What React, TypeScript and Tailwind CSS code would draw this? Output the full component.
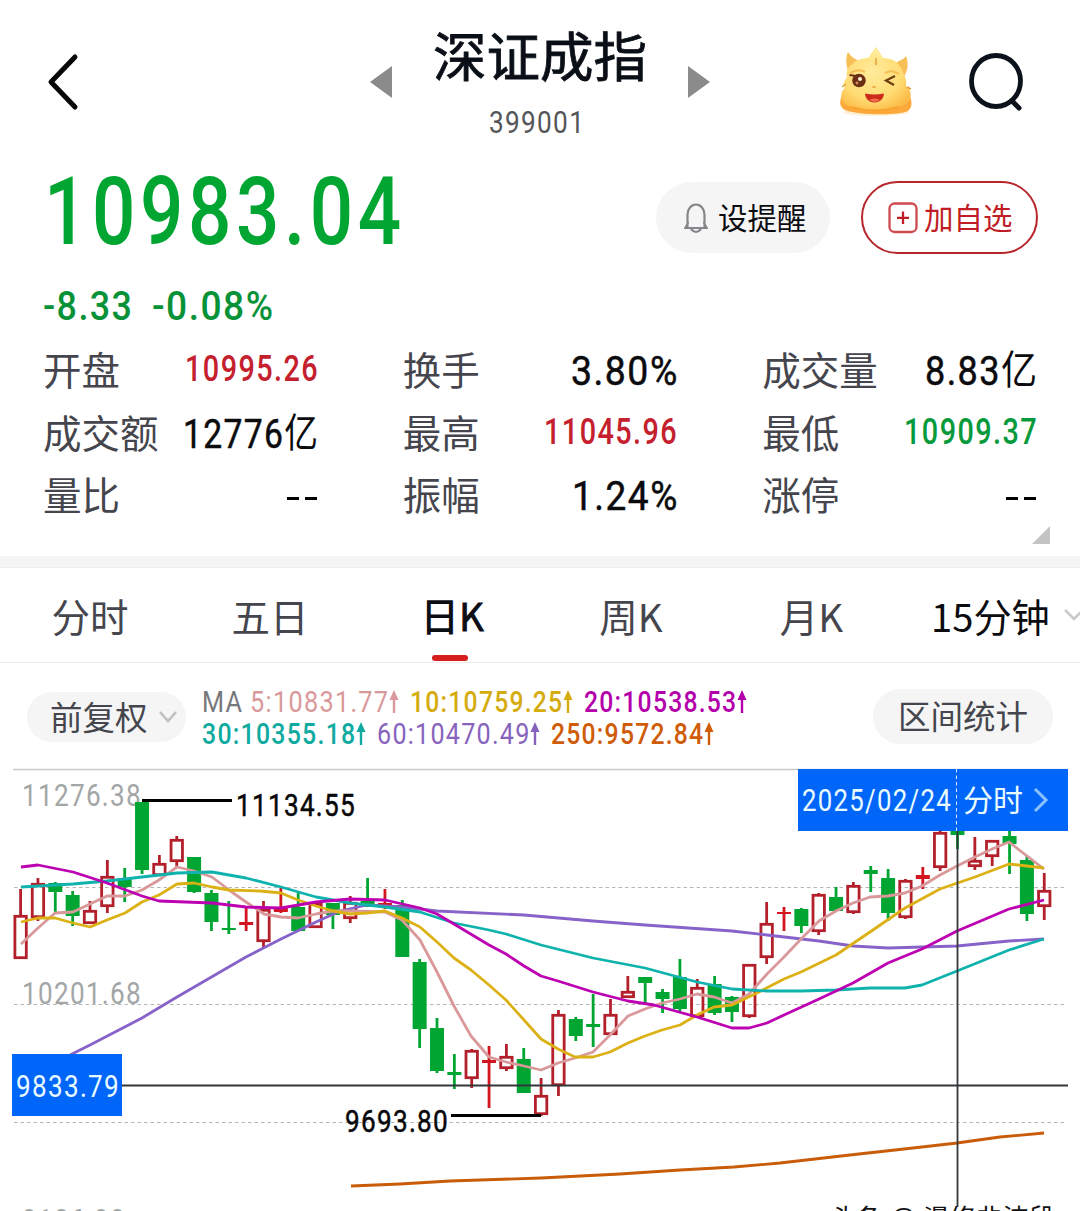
import { useLayoutEffect, useRef, useState, type ReactNode } from "react";

/* Condenses or widens its text to fill the width given by the class name. */
function Fit({ className = "", children }: { className?: string; children: ReactNode }) {
  const box = useRef<HTMLSpanElement>(null);
  const text = useRef<HTMLSpanElement>(null);
  const [scale, setScale] = useState(1);
  useLayoutEffect(() => {
    if (box.current && text.current) {
      const trailing = parseFloat(getComputedStyle(text.current).letterSpacing) || 0;
      setScale(box.current.clientWidth / (text.current.offsetWidth - trailing));
    }
  }, []);
  return (
    <span ref={box} className={`block shrink-0 whitespace-nowrap ${className}`}>
      <span ref={text} className="inline-block origin-left" style={{ transform: `scaleX(${scale})` }}>
        {children}
      </span>
    </span>
  );
}

function Mascot() {
  return (
    <svg viewBox="0 0 76 72" className="h-[72px] w-[76px]">
      <defs>
        <radialGradient id="face" cx="0.45" cy="0.4" r="0.65">
          <stop offset="0" stopColor="#ffeb9c" />
          <stop offset="0.65" stopColor="#ffdc74" />
          <stop offset="1" stopColor="#fcbc48" />
        </radialGradient>
        <linearGradient id="horn" x1="0" y1="0" x2="0" y2="1">
          <stop offset="0" stopColor="#fff0a0" />
          <stop offset="1" stopColor="#ffe080" />
        </linearGradient>
      </defs>
      <ellipse cx="38" cy="66" rx="33" ry="4" fill="#fff0d8" />
      <path d="M5 48C1 54 1 61 7 64C18 69 60 70 70 65C75 61 74 54 71 48Z" fill="#fca83a" />
      <path d="M10 6C7 12 8 22 12 28L26 17C20 14 14 13 10 6ZM68 10C66 14 60 14 56 19L64 33C70 27 71 17 68 10Z" fill="#f6c057" />
      <path d="M12 20C17 14 25 12 30 12L38 1L45 12C54 12 61 16 64 24C67 31 69 34 68 40C73 43 74 50 71 55C62 67 14 67 5 56C2 51 3 45 7 42C4 38 7 34 9 31C8 26 9 23 12 20Z" fill="url(#face)" />
      <path d="M30 13L38 2L45 13L39 21Z" fill="url(#horn)" />
      <path d="M38 12V19M8 38L4 41M69 41L73 43" stroke="#dda03a" strokeWidth="1.4" fill="none" />
      <path d="M12 27Q20 22 27 26M47 27Q54 23 61 28" stroke="#f6bd52" strokeWidth="2" fill="none" />
      <circle cx="21" cy="34.500" r="6.800" fill="#6b3013" />
      <path d="M11.500 29L18 30" stroke="#6b3013" strokeWidth="2" />
      <circle cx="22" cy="33" r="2" fill="#fff3d8" />
      <circle cx="19" cy="37" r="1.400" fill="#d28a58" />
      <path d="M57 30L48 34.500L56 39" fill="none" stroke="#6b3d10" strokeWidth="2.200" />
      <ellipse cx="36" cy="41" rx="2" ry="1" fill="#e9aa43" />
      <path d="M27 47.500Q36 49.500 46 47.500C45.500 53 42 56.500 36.500 56.500C31 56.500 27.500 53 27 47.500Z" fill="#cc2b1b" />
      <path d="M31 54Q36 51 42 54Q37 57.500 31 54Z" fill="#f46c50" />
      <path d="M13 61Q36 68 61 61" stroke="#f8a62f" strokeWidth="2" fill="none" />
    </svg>
  );
}

function Stat({ label, children }: { label: string; children: ReactNode }) {
  return (
    <div className="flex h-[62.500px] items-center justify-between">
      <span className="relative -top-[3px] text-[38.500px] leading-none text-[#45464d]">{label}</span>
      {children}
    </div>
  );
}

const priceText = "font-[Roboto] text-[36px] font-medium tracking-[0.05em] leading-[36px] relative -top-[2px]";
const plainText =
  "font-[Roboto,'Noto_Sans_CJK_SC'] text-[40px] font-normal tracking-[0.04em] [-webkit-text-stroke:0.5px_#0b0b0e] leading-[40px] text-[#0b0b0e] relative top-px";

function Yi() {
  return <span className="relative -top-px [-webkit-text-stroke:0px]">亿</span>;
}

function Dashes() {
  return (
    <span className="relative top-[2px] flex gap-[6px] pr-[1px]">
      <i className="h-[3px] w-[12px] bg-black" />
      <i className="h-[3px] w-[12px] bg-black" />
    </span>
  );
}

function Average({ color, width, children }: { color: string; width: string; children: string }) {
  return (
    <span className={`flex items-center ${color}`}>
      <Fit className={width}>{children}</Fit>
      <svg viewBox="0 0 10 24" className="relative -top-px ml-px h-[24px] w-[10px]">
        <path d="M5 1L9.500 11H6.200V24H3.800V11H0.500Z" fill="currentColor" />
      </svg>
    </span>
  );
}

/* kind, body top, body bottom, high, low — in chart pixels */
type Candle = ["r" | "g" | "x", number, number, number, number];
const candles: Candle[] = [
  ["r", 915, 959, 889, 959], ["r", 883, 918, 878, 921], ["g", 883, 892, 882, 912], ["g", 895, 916, 891, 926],
  ["r", 910, 924, 901, 924], ["r", 876, 907, 860, 913], ["g", 878, 887, 868, 902], ["g", 802, 870, 802, 874],
  ["r", 863, 876, 855, 876], ["r", 839, 862, 836, 867], ["g", 857, 892, 857, 893], ["g", 893, 922, 890, 931],
  ["g", 928, 930, 901, 934], ["x", 922, 925, 908, 931], ["r", 909, 942, 901, 948], ["x", 907, 912, 888, 913],
  ["g", 907, 931, 893, 931], ["r", 903, 928, 903, 928], ["g", 903, 915, 903, 929], ["r", 902, 919, 896, 923],
  ["g", 901, 907, 878, 907], ["x", 903, 905, 889, 909], ["g", 905, 957, 900, 957], ["g", 962, 1029, 959, 1048],
  ["g", 1028, 1071, 1018, 1073], ["g", 1072, 1075, 1054, 1089], ["r", 1050, 1079, 1049, 1088], ["x", 1060, 1063, 1046, 1108],
  ["r", 1056, 1069, 1044, 1071], ["g", 1059, 1093, 1048, 1093], ["r", 1095, 1115, 1078, 1116], ["r", 1014, 1086, 1010, 1096],
  ["g", 1019, 1036, 1017, 1041], ["g", 1024, 1027, 994, 1047], ["r", 1014, 1035, 999, 1035], ["r", 991, 998, 976, 998],
  ["g", 977, 983, 977, 1004], ["g", 992, 999, 989, 1013], ["g", 977, 1009, 959, 1011], ["r", 987, 1017, 979, 1017],
  ["g", 984, 1013, 976, 1015], ["g", 997, 1012, 996, 1022], ["r", 964, 1017, 964, 1018], ["r", 923, 958, 902, 964],
  ["x", 912, 914, 907, 931], ["g", 909, 926, 908, 933], ["r", 894, 932, 893, 935], ["g", 897, 911, 887, 911],
  ["r", 885, 913, 882, 914], ["g", 870, 874, 866, 892], ["g", 878, 913, 869, 921], ["r", 880, 918, 879, 919],
  ["x", 875, 879, 867, 889], ["r", 832, 868, 830, 871], ["g", 824, 835, 824, 849], ["r", 860, 867, 837, 870],
  ["r", 840, 857, 840, 866], ["g", 836, 844, 830, 874], ["g", 860, 914, 856, 921], ["r", 890, 907, 873, 920],
];

const averages: { color: string; points: string }[] = [
  {
    color: "#8763c9",
    points:
      "70,1055 90,1045 142,1018 177,997 246,957 281,939 316,922 340,911 367,905 402,907 437,911 524,915 593,921 645,925 732,931 767,935 819,941 853,946 888,948 957,946 1009,941 1044,939",
  },
  {
    color: "#d9999a",
    points:
      "21,944 38,928 55,913 73,912 90,904 107,896 125,896 142,890 159,880 177,867 194,871 212,877 229,890 246,902 264,914 281,917 298,918 316,914 333,911 350,911 385,912 402,920 420,940 437,972 454,1006 471,1036 489,1057 506,1062 524,1066 541,1070 558,1063 575,1058 593,1052 610,1035 628,1016 645,1009 662,1003 680,999 697,994 714,997 732,1003 749,994 767,974 784,957 801,939 819,921 836,911 853,903 870,897 888,896 905,893 922,886 940,875 957,866 975,857 992,849 1009,842 1027,856 1044,869",
  },
  {
    color: "#dcb116",
    points:
      "21,922 38,918 55,918 73,923 90,927 107,920 125,913 142,902 159,895 177,884 194,883 212,887 229,890 260,891 281,893 298,900 316,906 333,911 350,914 367,913 385,911 402,918 420,927 437,942 454,958 471,970 489,985 506,1000 524,1020 541,1039 558,1049 575,1057 593,1057 610,1052 628,1043 645,1036 662,1030 680,1025 697,1015 714,1007 732,1005 757,993 784,979 801,972 836,955 870,932 905,908 940,889 975,877 1009,864 1027,866 1044,868",
  },
  {
    color: "#0fb2ac",
    points:
      "21,887 73,884 107,881 142,877 177,873 212,872 246,878 281,887 316,897 350,903 385,907 420,912 454,923 489,930 506,934 541,945 593,958 645,968 697,982 732,989 767,991 801,991 836,990 870,988 905,988 922,985 957,971 1009,950 1044,939",
  },
  {
    color: "#bd00b2",
    points:
      "21,867 38,865 73,872 107,883 142,896 159,901 212,903 246,907 281,908 316,902 350,899 385,900 420,908 437,914 454,924 489,945 506,954 524,966 541,976 558,981 593,992 628,1001 654,1005 697,1017 732,1028 749,1028 767,1023 784,1015 819,999 853,983 888,963 922,949 957,931 1009,909 1044,900",
  },
  {
    color: "#c95c08",
    points:
      "351,1186 400,1184 450,1181 541,1178 620,1174 680,1170 734,1167 780,1163 850,1155 922,1147 957,1143 1000,1137 1044,1133",
  },
];

function CandleMark({ candle, index }: { candle: Candle; index: number }) {
  const [kind, top, bottom, high, low] = candle;
  const x = 20.6 + 17.35 * index;
  if (kind === "r") {
    return (
      <g stroke="#b3202b" strokeWidth="2.800" fill="none">
        <path d={`M${x} ${high}V${top}M${x} ${bottom}V${low}`} />
        <rect x={x - 5.7} y={top + 1.3} width="11.400" height={bottom - top - 2.6} />
      </g>
    );
  }
  const color = kind === "g" ? "#00a532" : "#d3151f";
  return (
    <g fill={color}>
      <rect x={x - 1.4} y={high} width="2.800" height={low - high} />
      <rect x={x - 7} y={top} width="14" height={bottom - top} />
    </g>
  );
}

function Chart() {
  return (
    <svg viewBox="0 760 1080 451" className="block h-[451px] w-[1080px] font-[Roboto,'Noto_Sans_CJK_SC',sans-serif]">
      <path d="M13 769.500H1068" stroke="#c9c9c9" strokeWidth="1.500" />
      <path d="M14 887.500H1067M14 1004.500H1067M14 1122.500H1067" stroke="#b5b5b5" strokeDasharray="3.500 3" />
      <g fill="#a3a6a6" fontSize="30.500" letterSpacing="1.500">
        <text x="22" y="806" textLength="120" lengthAdjust="spacingAndGlyphs">11276.38</text>
        <text x="22" y="1004" textLength="120" lengthAdjust="spacingAndGlyphs">10201.68</text>
        <text x="22" y="1231" textLength="104" lengthAdjust="spacingAndGlyphs">9126.98</text>
      </g>
      {candles.map((candle, index) => (
        <CandleMark key={index} candle={candle} index={index} />
      ))}
      {averages.map(({ color, points }) => (
        <polyline key={color} points={points} fill="none" stroke={color} strokeWidth="2.800" strokeLinejoin="round" />
      ))}
      <path d="M142 800.500H232M451 1115.500H541" stroke="#000" strokeWidth="3" />
      <g fill="#08080a" stroke="#08080a" strokeWidth="0.500" fontSize="30.500" letterSpacing="1.500">
        <text x="236" y="816" textLength="120" lengthAdjust="spacingAndGlyphs">11134.55</text>
        <text x="345" y="1132" textLength="104" lengthAdjust="spacingAndGlyphs">9693.80</text>
      </g>
      <path d="M122 1085.500H1068M957.500 830V1207" stroke="#34373a" strokeWidth="1.800" />
      <rect x="12" y="1054" width="110" height="62" fill="#0066fa" />
      <rect x="798" y="769" width="270" height="62" fill="#0066fa" />
      <path d="M956.500 769V831" stroke="#d8ebff" strokeDasharray="3.500 3" />
      <g fill="#e9fbff" fontSize="30.500" letterSpacing="1.500">
        <text x="16" y="1097" textLength="104" lengthAdjust="spacingAndGlyphs">9833.79</text>
        <text x="802" y="811" textLength="150" lengthAdjust="spacingAndGlyphs">2025/02/24</text>
      </g>
      <text x="963" y="811" fontSize="30" fill="#e9fbff" textLength="60" lengthAdjust="spacingAndGlyphs" className="font-['Noto_Sans_CJK_SC']">分时</text>
      <path d="M1035 789L1046 800L1035 811" fill="none" stroke="#8cc0ff" strokeWidth="3" />
      <g fontSize="26" fill="#111">
        <text x="831" y="1228" textLength="51">头条</text>
        <text x="890" y="1227" textLength="26" lengthAdjust="spacingAndGlyphs">@</text>
        <text x="923" y="1228" textLength="132">漫修韭波段</text>
      </g>
    </svg>
  );
}

const tab = "flex w-[180px] shrink-0 justify-center";

export default function App() {
  return (
    <div className="h-[1211px] w-[1080px] overflow-hidden bg-white font-['Noto_Sans_CJK_SC',sans-serif]">
      <header className="flex h-[150px] items-start">
        <div className="w-[370px] shrink-0 pl-[46px] pt-[53px]">
          <svg viewBox="0 0 34 58" className="h-[58px] w-[34px]">
            <path d="M29 4L5 29L29 54" fill="none" stroke="#080808" strokeWidth="5" strokeLinecap="round" strokeLinejoin="round" />
          </svg>
        </div>
        <svg viewBox="0 0 22 34" className="mt-[65px] h-[34px] w-[22px] shrink-0">
          <path d="M0 17L22 1V33Z" fill="#8b8b8b" />
        </svg>
        <div className="flex w-[296px] shrink-0 flex-col items-center pt-[27px]">
          <h1 className="text-[53.500px] font-normal leading-[54px] text-[#0a0f17] [-webkit-text-stroke:0.8px_#0a0f17]">深证成指</h1>
          <div className="mr-[8px] mt-[25px] font-[Roboto] text-[31px] leading-[34px] tracking-[0.05em] text-[#55565a]">
            <Fit className="w-[95px]">399001</Fit>
          </div>
        </div>
        <svg viewBox="0 0 22 34" className="mt-[65px] h-[34px] w-[22px] shrink-0">
          <path d="M22 17L0 1V33Z" fill="#8b8b8b" />
        </svg>
        <div className="ml-[128px] mt-[46px]">
          <Mascot />
        </div>
        <svg viewBox="0 0 60 64" className="ml-[53px] mt-[51px] h-[64px] w-[60px]">
          <ellipse cx="29" cy="30" rx="24.500" ry="25.500" fill="none" stroke="#0c121b" strokeWidth="4.800" />
          <path d="M45 50L52 57" stroke="#0c121b" strokeWidth="5" strokeLinecap="round" />
        </svg>
      </header>

      <section className="flex h-[136px] items-start">
        <div className="w-[656px] shrink-0 pl-[44px] pt-[12px] font-[Roboto] text-[94px] font-medium leading-[100px] tracking-[0.06em] text-[#00a532]">
          <Fit className="w-[357px]">10983.04</Fit>
        </div>
        <button className="mt-[32px] flex h-[71px] w-[174px] items-center rounded-full bg-[#f5f5f5] pl-[27px] text-[29.500px] leading-none text-[#0b0c10]">
          <svg viewBox="0 0 26 32" className="mr-[9px] h-[32px] w-[26px]" fill="none" stroke="#85868a" strokeWidth="2.200">
            <path d="M2 26H24M4.500 25V12.500A8.500 10 0 0 1 21.500 12.500V25M2.500 26L5 21M23.500 26L21 21M8.500 27.500Q13 32.500 17.500 27.500" strokeLinecap="round" />
          </svg>
          <span className="relative -top-px">设提醒</span>
        </button>
        <button className="ml-[31px] mt-[31px] flex h-[73px] w-[177px] items-center rounded-full border-2 border-[#b8262c] pl-[25px] text-[29.500px] leading-none text-[#c01d26]">
          <svg viewBox="0 0 30 32" className="mr-[6px] h-[32px] w-[30px]" fill="none" stroke="currentColor">
            <rect x="1.500" y="1.500" width="27" height="28.500" rx="5" strokeWidth="2.300" opacity="0.800" />
            <path d="M15 9.500V22M9 15.800H21" strokeWidth="2.300" />
          </svg>
          <span className="relative -top-px">加自选</span>
        </button>
      </section>

      <section className="flex h-[54px] items-start gap-[20px] pl-[43px] pt-px font-[Roboto] text-[40px] font-medium leading-[40px] tracking-[0.04em] text-[#079238]">
        <Fit className="w-[89px]">-8.33</Fit>
        <Fit className="w-[121px]">-0.08%</Fit>
      </section>

      <section className="relative grid h-[216px] grid-cols-3 content-start gap-x-[85px] pl-[43px] pr-[43px]">
        <Stat label="开盘"><span className={`${priceText} text-[#c4202e]`}><Fit className="w-[133px]">10995.26</Fit></span></Stat>
        <Stat label="换手"><span className={plainText}><Fit className="w-[106px]">3.80%</Fit></span></Stat>
        <Stat label="成交量"><span className={plainText}><Fit className="w-[112px]">8.83<Yi /></Fit></span></Stat>
        <Stat label="成交额"><span className={plainText}><Fit className="w-[135px]">12776<Yi /></Fit></span></Stat>
        <Stat label="最高"><span className={`${priceText} text-[#c4202e]`}><Fit className="w-[133px]">11045.96</Fit></span></Stat>
        <Stat label="最低"><span className={`${priceText} text-[#079a3d]`}><Fit className="w-[133px]">10909.37</Fit></span></Stat>
        <Stat label="量比"><Dashes /></Stat>
        <Stat label="振幅"><span className={plainText}><Fit className="w-[105px]">1.24%</Fit></span></Stat>
        <Stat label="涨停"><Dashes /></Stat>
        <svg viewBox="0 0 18 18" className="absolute right-[30px] top-[186px] h-[18px] w-[18px]">
          <path d="M18 0V18H0Z" fill="#c4c4c4" />
        </svg>
      </section>

      <div className="h-[12px] border-b border-[#ededed] bg-[#f5f5f5]" />

      <nav className="flex h-[95px] items-center overflow-hidden border-b border-[#ededed] text-[38.500px] leading-[40px] text-[#45464d]">
        <span className={tab}>分时</span>
        <span className={tab}>五日</span>
        <span className="relative flex h-[94px] w-[180px] shrink-0 flex-col items-center pl-[4px] pt-[26px] font-medium text-[#0b0e14]">
          <Fit className="w-[63px]">日<span className="font-normal [-webkit-text-stroke:0.8px_#0b0e14]">K</span></Fit>
          <i className="absolute bottom-[1px] left-[72px] h-[6px] w-[36px] rounded-full bg-[#d71e1e]" />
        </span>
        <span className={`${tab} pl-[2px]`}>周K</span>
        <span className={`${tab} pl-[3px]`}>月K</span>
        <span className="ml-[31px] flex shrink-0 items-center text-[#0b0c10]">
          <Fit className="w-[119px]">15分钟</Fit>
          <svg viewBox="0 0 22 14" className="ml-[13px] h-[14px] w-[22px]">
            <path d="M2 2L11 11L20 2" fill="none" stroke="#c8c8c8" strokeWidth="2.500" />
          </svg>
        </span>
      </nav>

      <section className="flex h-[97px] items-start">
        <button className="ml-[27px] mt-[29px] flex h-[50px] w-[159px] shrink-0 items-center rounded-full bg-[#f5f5f5] pl-[23px] text-[32.500px] leading-none text-[#45464d]">
          <span className="relative -top-px">前复权</span>
          <svg viewBox="0 0 20 14" className="ml-[10px] h-[14px] w-[20px]">
            <path d="M2 2L10 11L18 2" fill="none" stroke="#c0c0c0" strokeWidth="2.500" />
          </svg>
        </button>
        <div className="ml-[16px] mt-[23px] w-[671px] shrink-0 font-[Roboto] text-[30px] leading-[32px] tracking-[0.05em]">
          <div className="flex h-[32px] items-center">
            <Fit className="mr-[8px] w-[40px] text-[#77787b]">MA</Fit>
            <div className="flex gap-[11px]">
              <Average color="text-[#d9999a]" width="w-[138px]">5:10831.77</Average>
              <Average color="text-[#d5ac10] font-medium" width="w-[152px]">10:10759.25</Average>
              <Average color="text-[#b300aa] font-medium" width="w-[152px]">20:10538.53</Average>
            </div>
          </div>
          <div className="flex h-[32px] items-center gap-[11px]">
            <Average color="text-[#10aaa0] font-medium" width="w-[153px]">30:10355.18</Average>
            <Average color="text-[#8763bd]" width="w-[152px]">60:10470.49</Average>
            <Average color="text-[#cf5c08] font-medium" width="w-[152px]">250:9572.84</Average>
          </div>
        </div>
        <button className="mt-[26px] flex h-[55px] w-[180px] shrink-0 items-center justify-center rounded-full bg-[#f5f5f5] text-[32.500px] leading-none text-[#45464d]">
          <span className="relative -top-px">区间统计</span>
        </button>
      </section>

      <Chart />
    </div>
  );
}
